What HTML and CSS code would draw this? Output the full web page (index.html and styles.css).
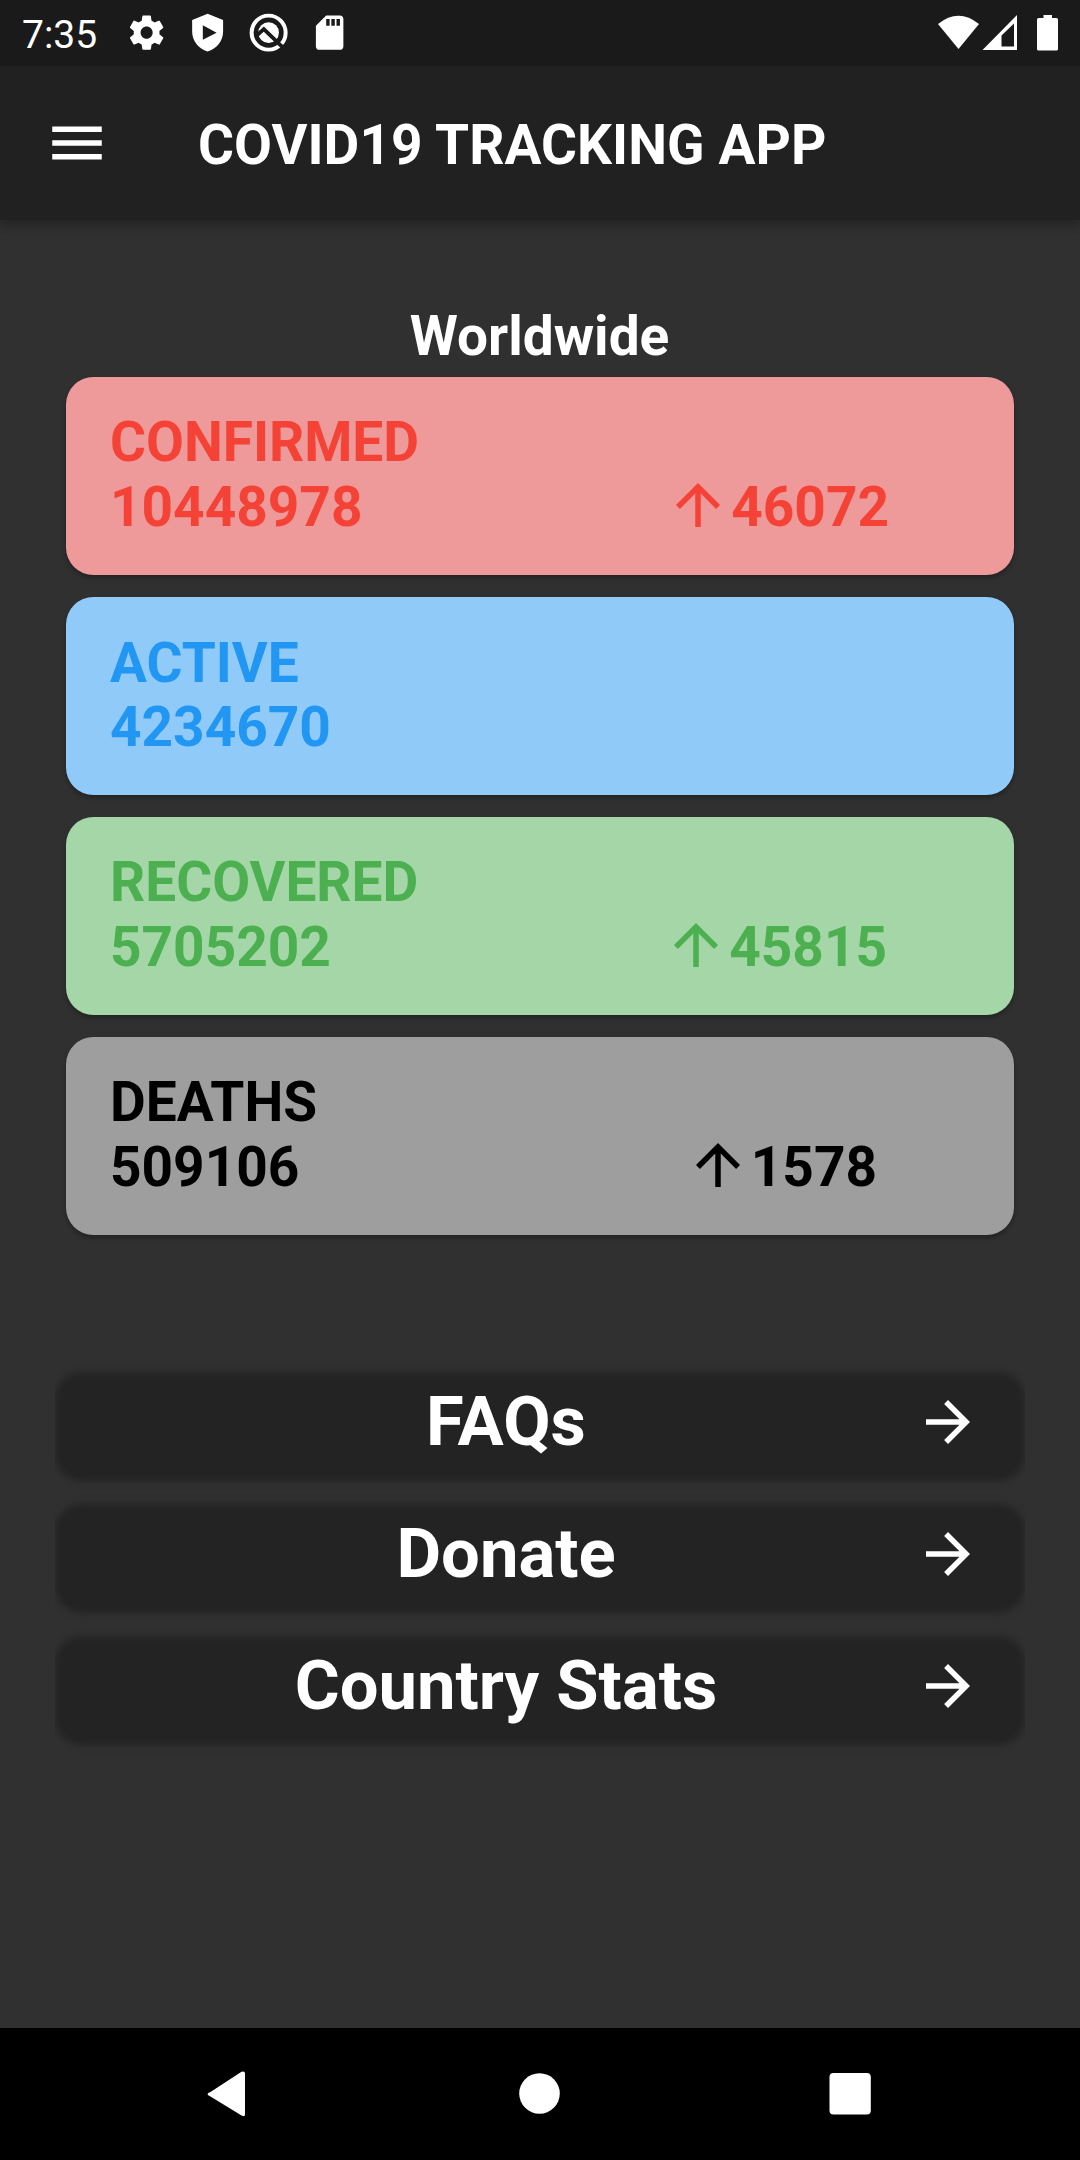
FILE: index.html
```html
<!DOCTYPE html>
<html lang="en">
<head>
<meta charset="utf-8">
<title>COVID19 TRACKING APP</title>
<link rel="stylesheet" href="styles.css">
</head>
<body>
<svg class="defs" aria-hidden="true">
  <symbol id="arrow-up" viewBox="0 0 24 24"><path d="M4 12l1.41 1.41L11 7.83V20h2V7.83l5.58 5.59L20 12l-8-8-8 8z"/></symbol>
  <symbol id="arrow-right" viewBox="0 0 24 24"><path d="M12 4l-1.41 1.41L16.17 11H4v2h12.17l-5.58 5.59L12 20l8-8z"/></symbol>
</svg>
<div class="screen">
  <div class="status">
    <span class="clock">7:35</span>
    <div class="notifications">
      <svg class="note" viewBox="0 0 24 24"><path d="M19.43 12.98c.04-.32.07-.64.07-.98s-.03-.66-.07-.98l2.11-1.65c.19-.15.24-.42.12-.64l-2-3.46c-.12-.22-.39-.3-.61-.22l-2.49 1c-.52-.4-1.08-.73-1.69-.98l-.38-2.65C14.46 2.18 14.25 2 14 2h-4c-.25 0-.46.18-.49.42l-.38 2.65c-.61.25-1.17.59-1.69.98l-2.49-1c-.23-.09-.49 0-.61.22l-2 3.46c-.13.22-.07.49.12.64l2.11 1.65c-.04.32-.07.65-.07.98s.03.66.07.98l-2.11 1.65c-.19.15-.24.42-.12.64l2 3.46c.12.22.39.3.61.22l2.49-1c.52.4 1.08.73 1.69.98l.38 2.65c.03.24.24.42.49.42h4c.25 0 .46-.18.49-.42l.38-2.65c.61-.25 1.17-.59 1.69-.98l2.49 1c.23.09.49 0 .61-.22l2-3.46c.12-.22.07-.49-.12-.64l-2.11-1.65zM12 15.500c-1.930 0-3.500-1.570-3.500-3.500s1.570-3.500 3.500-3.500 3.500 1.570 3.500 3.500-1.570 3.500-3.500 3.500z"/></svg>
      <svg class="note" viewBox="0 0 24 24"><path fill-rule="evenodd" d="M12 1L3 4.600v6.900c0 5.200 3.700 9.900 9 11.500 5.300-1.600 9-6.300 9-11.500V4.600zM9.200 7.700V16.200L17.200 12z"/></svg>
      <svg class="note" viewBox="0 0 24 24"><circle class="ring" cx="12" cy="12" r="9.900"/><circle cx="12" cy="12" r="6"/><path class="cut" d="M5 13.700L9.200 9.900 21 21.300"/></svg>
      <svg class="note" viewBox="0 0 24 24"><path d="M18 2h-8L4.020 8 4 20c0 1.100.9 2 2 2h12c1.100 0 2-.9 2-2V4c0-1.100-.9-2-2-2zm-6 6h-2V4h2v4zm3 0h-2V4h2v4zm3 0h-2V4h2v4z"/></svg>
    </div>
    <svg class="system" viewBox="0 0 122 38"><path d="M0 10Q20.500-6.500 41 10L20.500 35z"/><path fill-rule="evenodd" d="M79 1V36H44.500zM76 9.500L63.500 21.500V32.500H76z"/><path d="M105.500 1h8.500v3h4.500q1.500 0 1.500 1.500V35q0 1.500-1.500 1.500h-18q-1.500 0-1.500-1.500V5.500q0-1.500 1.500-1.500h5z"/></svg>
  </div>
  <header class="appbar">
    <svg class="icon" viewBox="0 0 24 24"><path d="M3 18h18v-2H3v2zm0-5h18v-2H3v2zm0-7v2h18V6H3z"/></svg>
    <h1 class="title">COVID19 TRACKING APP</h1>
  </header>
  <main class="content">
    <h2 class="heading">Worldwide</h2>
    <section class="cards">
      <div class="card confirmed">
        <div class="total"><div>CONFIRMED</div><div>10448978</div></div>
        <div class="delta"><svg class="icon"><use href="#arrow-up"/></svg><span>46072</span></div>
      </div>
      <div class="card active">
        <div class="total"><div>ACTIVE</div><div>4234670</div></div>
      </div>
      <div class="card recovered">
        <div class="total"><div>RECOVERED</div><div>5705202</div></div>
        <div class="delta"><svg class="icon"><use href="#arrow-up"/></svg><span>45815</span></div>
      </div>
      <div class="card deaths">
        <div class="total"><div>DEATHS</div><div>509106</div></div>
        <div class="delta"><svg class="icon"><use href="#arrow-up"/></svg><span>1578</span></div>
      </div>
    </section>
    <nav class="links">
      <a class="link"><span class="label">FAQs</span><svg class="icon"><use href="#arrow-right"/></svg></a>
      <a class="link"><span class="label">Donate</span><svg class="icon"><use href="#arrow-right"/></svg></a>
      <a class="link"><span class="label">Country Stats</span><svg class="icon"><use href="#arrow-right"/></svg></a>
    </nav>
  </main>
  <footer class="navbar">
    <svg class="key" viewBox="0 0 50 50"><path d="M7.500 23L38.500 2.800Q42 1.500 42 4.500V45.500Q42 48.500 38.500 46.500L7.500 27.500Q1.500 25 7.500 23z"/></svg>
    <svg class="key" viewBox="0 0 50 50"><circle cx="25.500" cy="24.500" r="20.300"/></svg>
    <svg class="key" viewBox="0 0 50 50"><rect x="4.500" y="4" width="41.300" height="41.500" rx="4"/></svg>
  </footer>
</div>
</body>
</html>
```
FILE: styles.css
```css
* { box-sizing: border-box; }
body {
  margin: 0;
  background: #303030;
  color: #fff;
  font-family: Roboto, sans-serif;
}
svg { display: block; fill: currentColor; flex: none; }
.defs { display: none; }
.screen {
  width: 1080px;
  height: 2160px;
  display: flex;
  flex-direction: column;
  overflow: hidden;
}
.status {
  position: relative;
  z-index: 1;
  height: 66px;
  background: #1a1a1a;
  display: flex;
  align-items: center;
  padding: 0 20px 0 22px;
}
.clock { font-size: 39px; line-height: 66px; width: 104px; padding-top: 4px; }
.notifications { display: flex; gap: 19.600px; }
.note { width: 41.250px; height: 41.250px; }
.ring { fill: none; stroke: currentColor; stroke-width: 2.300; }
.cut { fill: none; stroke: #1a1a1a; stroke-width: 2.200; }
.system { width: 122px; height: 38px; margin-left: auto; }
.appbar {
  position: relative;
  height: 154px;
  background: #212121;
  display: flex;
  align-items: center;
  gap: 88px;
  padding-left: 44px;
  box-shadow: 0 5px 10px rgba(0, 0, 0, .2), 0 2px 14px rgba(0, 0, 0, .12);
}
.icon { width: 66px; height: 66px; }
.title, .heading { margin: 0; font-size: 55px; font-weight: 700; line-height: 65px; }
.title { padding-top: 4px; letter-spacing: .07px; }
.content { flex: 1; padding-top: 84px; }
.heading { text-align: center; margin-bottom: 8px; padding-right: 1px; }
.cards { display: flex; flex-direction: column; gap: 22px; padding: 0 66px; }
.card {
  height: 198px;
  border-radius: 27.500px;
  padding: 33px 44px;
  display: flex;
  justify-content: space-between;
  font-size: 55px;
  font-weight: 700;
  line-height: 65px;
  box-shadow: 0 3px 4px rgba(0, 0, 0, .28);
}
.confirmed { background: #ef9a9a; color: #f44336; }
.active { background: #90caf9; color: #2196f3; padding-top: 34px; line-height: 64px; }
.recovered { background: #a5d6a7; color: #4caf50; }
.deaths { background: #9e9e9e; color: #000; }
.delta { display: flex; align-items: center; align-self: flex-end; height: 65px; margin-bottom: 2px; }
.delta .icon { margin-top: -5px; }
.confirmed .delta { margin-right: 81px; }
.recovered .delta { margin-right: 83px; }
.deaths .delta { margin-right: 93px; }
.links {
  display: flex;
  flex-direction: column;
  gap: 22px;
  margin: 116px 55px 0;
  padding: 20px 0;
  overflow: hidden;
}
.link {
  position: relative;
  height: 110px;
  padding: 11px 44px 0 42px;
  display: flex;
  align-items: flex-start;
  isolation: isolate;
}
/* soft-edged panel behind each row */
.link::before {
  content: "";
  position: absolute;
  inset: 1px 0 0;
  z-index: -1;
  border-radius: 27.500px;
  background: #232323;
  filter: blur(3.500px);
}
.label { flex: 1; text-align: center; font-size: 68.750px; font-weight: 700; line-height: 80px; }
.link .icon { margin-top: 7px; }
.navbar {
  height: 132px;
  background: #000;
  display: flex;
  justify-content: space-between;
  padding: 41px 205px 0 203px;
}
.key { width: 50px; height: 50px; }
```
